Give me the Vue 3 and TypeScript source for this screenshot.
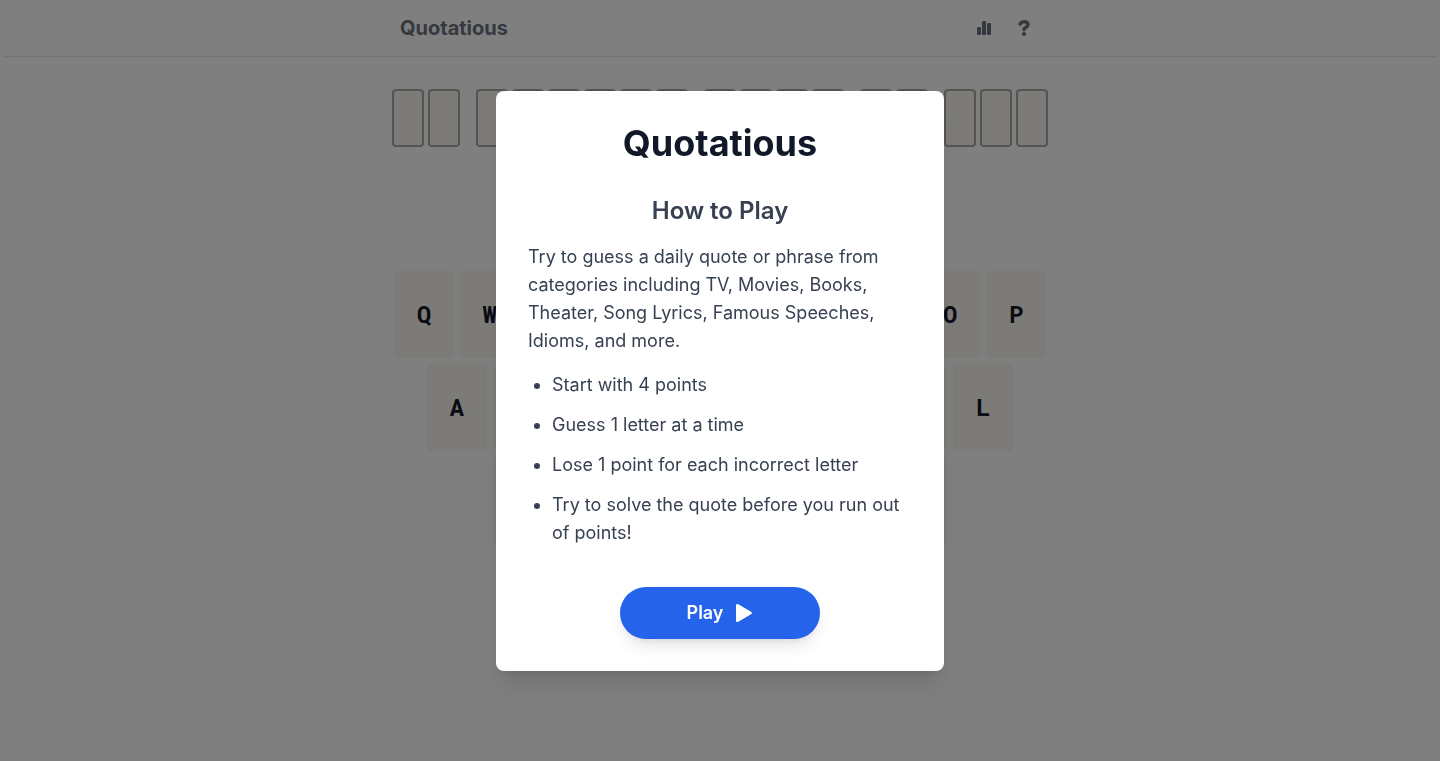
<script setup lang="ts">
import { ref } from 'vue'

const open = ref<boolean>(true)
const words: number[] = [2, 6, 4, 2, 3]
const rows: string[][] = ['QWERTYUIOP', 'ASDFGHJKL', 'ZXCVBNM'].map((row) => row.split(''))
const tips: string[] = [
  'Start with 4 points',
  'Guess 1 letter at a time',
  'Lose 1 point for each incorrect letter',
  'Try to solve the quote before you run out of points!',
]
</script>

<template>
  <div class="page">
    <header class="header">
      <div class="bar">
        <span class="brand">Quotatious</span>
        <div class="actions">
          <button class="icon-button" type="button" aria-label="Statistics">
            <svg width="16" height="16" viewBox="0 0 16 16" aria-hidden="true">
              <rect x="1" y="7" width="4" height="8" rx="1" />
              <rect x="6" y="1" width="4" height="14" rx="1" />
              <rect x="11" y="3" width="4" height="12" rx="1" />
            </svg>
          </button>
          <button class="icon-button" type="button" aria-label="How to play" @click="open = true">
            <svg width="16" height="16" viewBox="0 0 16 16" aria-hidden="true">
              <path class="hook" d="M4.2 3.9C5 2.4 6.4 1.7 8.1 1.7C10.5 1.7 12 2.9 12 4.8C12 7.4 8 7.2 8 9.6" />
              <circle cx="8" cy="14" r="2.1" />
            </svg>
          </button>
        </div>
      </div>
    </header>

    <main>
      <div class="quote">
        <div v-for="(length, w) in words" :key="w" class="word">
          <span v-for="n in length" :key="n" class="tile"></span>
        </div>
      </div>
      <div class="keyboard">
        <div v-for="(row, r) in rows" :key="r" class="key-row">
          <button v-for="letter in row" :key="letter" type="button" class="key">{{ letter }}</button>
        </div>
      </div>
    </main>

    <div v-if="open" class="overlay">
      <section class="dialog" role="dialog" aria-modal="true" aria-labelledby="dialog-title">
        <h1 id="dialog-title">Quotatious</h1>
        <h2>How to Play</h2>
        <p>
          Try to guess a daily quote or phrase from categories including TV, Movies, Books, Theater,
          Song Lyrics, Famous Speeches, Idioms, and more.
        </p>
        <ul>
          <li v-for="tip in tips" :key="tip">{{ tip }}</li>
        </ul>
        <button type="button" class="play" @click="open = false">
          Play
          <svg width="18" height="20" viewBox="0 0 18 20" aria-hidden="true">
            <path d="M1 2.4C1 1 2.1.5 3.3 1.2L16 8.7C17.2 9.4 17.2 10.6 16 11.3L3.3 18.8C2.1 19.5 1 19 1 17.6Z" />
          </svg>
        </button>
      </section>
    </div>
  </div>
</template>

<style>
body {
  margin: 0;
  background: #fff;
}
</style>

<style scoped>
* {
  box-sizing: border-box;
}
.page {
  min-height: 100vh;
  font-family: Inter, sans-serif;
  color: #374151;
}
button {
  border: 0;
  padding: 0;
  font: inherit;
  color: inherit;
  cursor: pointer;
}
.header {
  margin: 0 4px;
  border-bottom: 1px solid #e5e7eb;
}
.bar {
  display: flex;
  align-items: center;
  justify-content: space-between;
  max-width: 640px;
  height: 56px;
  margin: 0 auto;
}
.brand {
  font-size: 20px;
  line-height: 28px;
  font-weight: 700;
  color: #6b7280;
}
.actions {
  display: flex;
  margin-right: -4px;
}
.icon-button {
  display: grid;
  place-items: center;
  width: 40px;
  height: 40px;
  background: none;
  color: #6b7280;
}
.icon-button svg {
  fill: currentColor;
  overflow: visible;
}
.icon-button .hook {
  fill: none;
  stroke: currentColor;
  stroke-width: 3.6;
  stroke-linecap: round;
}
.quote {
  display: flex;
  justify-content: center;
  gap: 16px;
  padding-top: 32px;
}
.word {
  display: flex;
  gap: 4px;
}
.tile {
  width: 32px;
  height: 58px;
  border: 2px solid #aaa9a5;
  border-radius: 4px;
  background: #f9f7f0;
}
.keyboard {
  display: grid;
  gap: 6px;
  max-width: 652px;
  margin: 124px auto 0;
}
.key-row {
  display: flex;
  justify-content: center;
  gap: 6px;
}
.key {
  flex: 0 0 calc((100% - 54px) / 10);
  height: 87px;
  padding-bottom: 2px;
  border-radius: 4px;
  background: #f9f7f0;
  color: #111827;
  font: 700 24px/32px "Roboto Mono", "Liberation Mono", monospace;
}
.overlay {
  position: fixed;
  inset: 0;
  display: grid;
  place-items: center;
  background: rgb(0 0 0 / 50%);
}
.dialog {
  display: flex;
  flex-direction: column;
  width: 100%;
  max-width: 448px;
  padding: 32px;
  border-radius: 8px;
  background: #fff;
  box-shadow: 0 20px 25px -5px rgb(0 0 0 / 10%), 0 8px 10px -6px rgb(0 0 0 / 10%);
  font-size: 18px;
  line-height: 28px;
}
h1 {
  margin: 0;
  font-size: 36px;
  line-height: 40px;
  font-weight: 700;
  text-align: center;
  color: #111827;
}
h2 {
  margin: 32px 0 16px;
  font-size: 24px;
  line-height: 32px;
  font-weight: 600;
  text-align: center;
}
p {
  margin: 0;
}
ul {
  display: grid;
  gap: 12px;
  margin: 16px 0 40px;
  padding-left: 24px;
}
.play {
  display: flex;
  align-items: center;
  justify-content: center;
  align-self: center;
  gap: 12px;
  width: 200px;
  height: 52px;
  border-radius: 26px;
  background: #2563eb;
  color: #fff;
  font-weight: 600;
  box-shadow: 0 10px 15px -3px rgb(0 0 0 / 10%), 0 4px 6px -4px rgb(0 0 0 / 10%);
}
.play svg {
  fill: currentColor;
}
</style>
